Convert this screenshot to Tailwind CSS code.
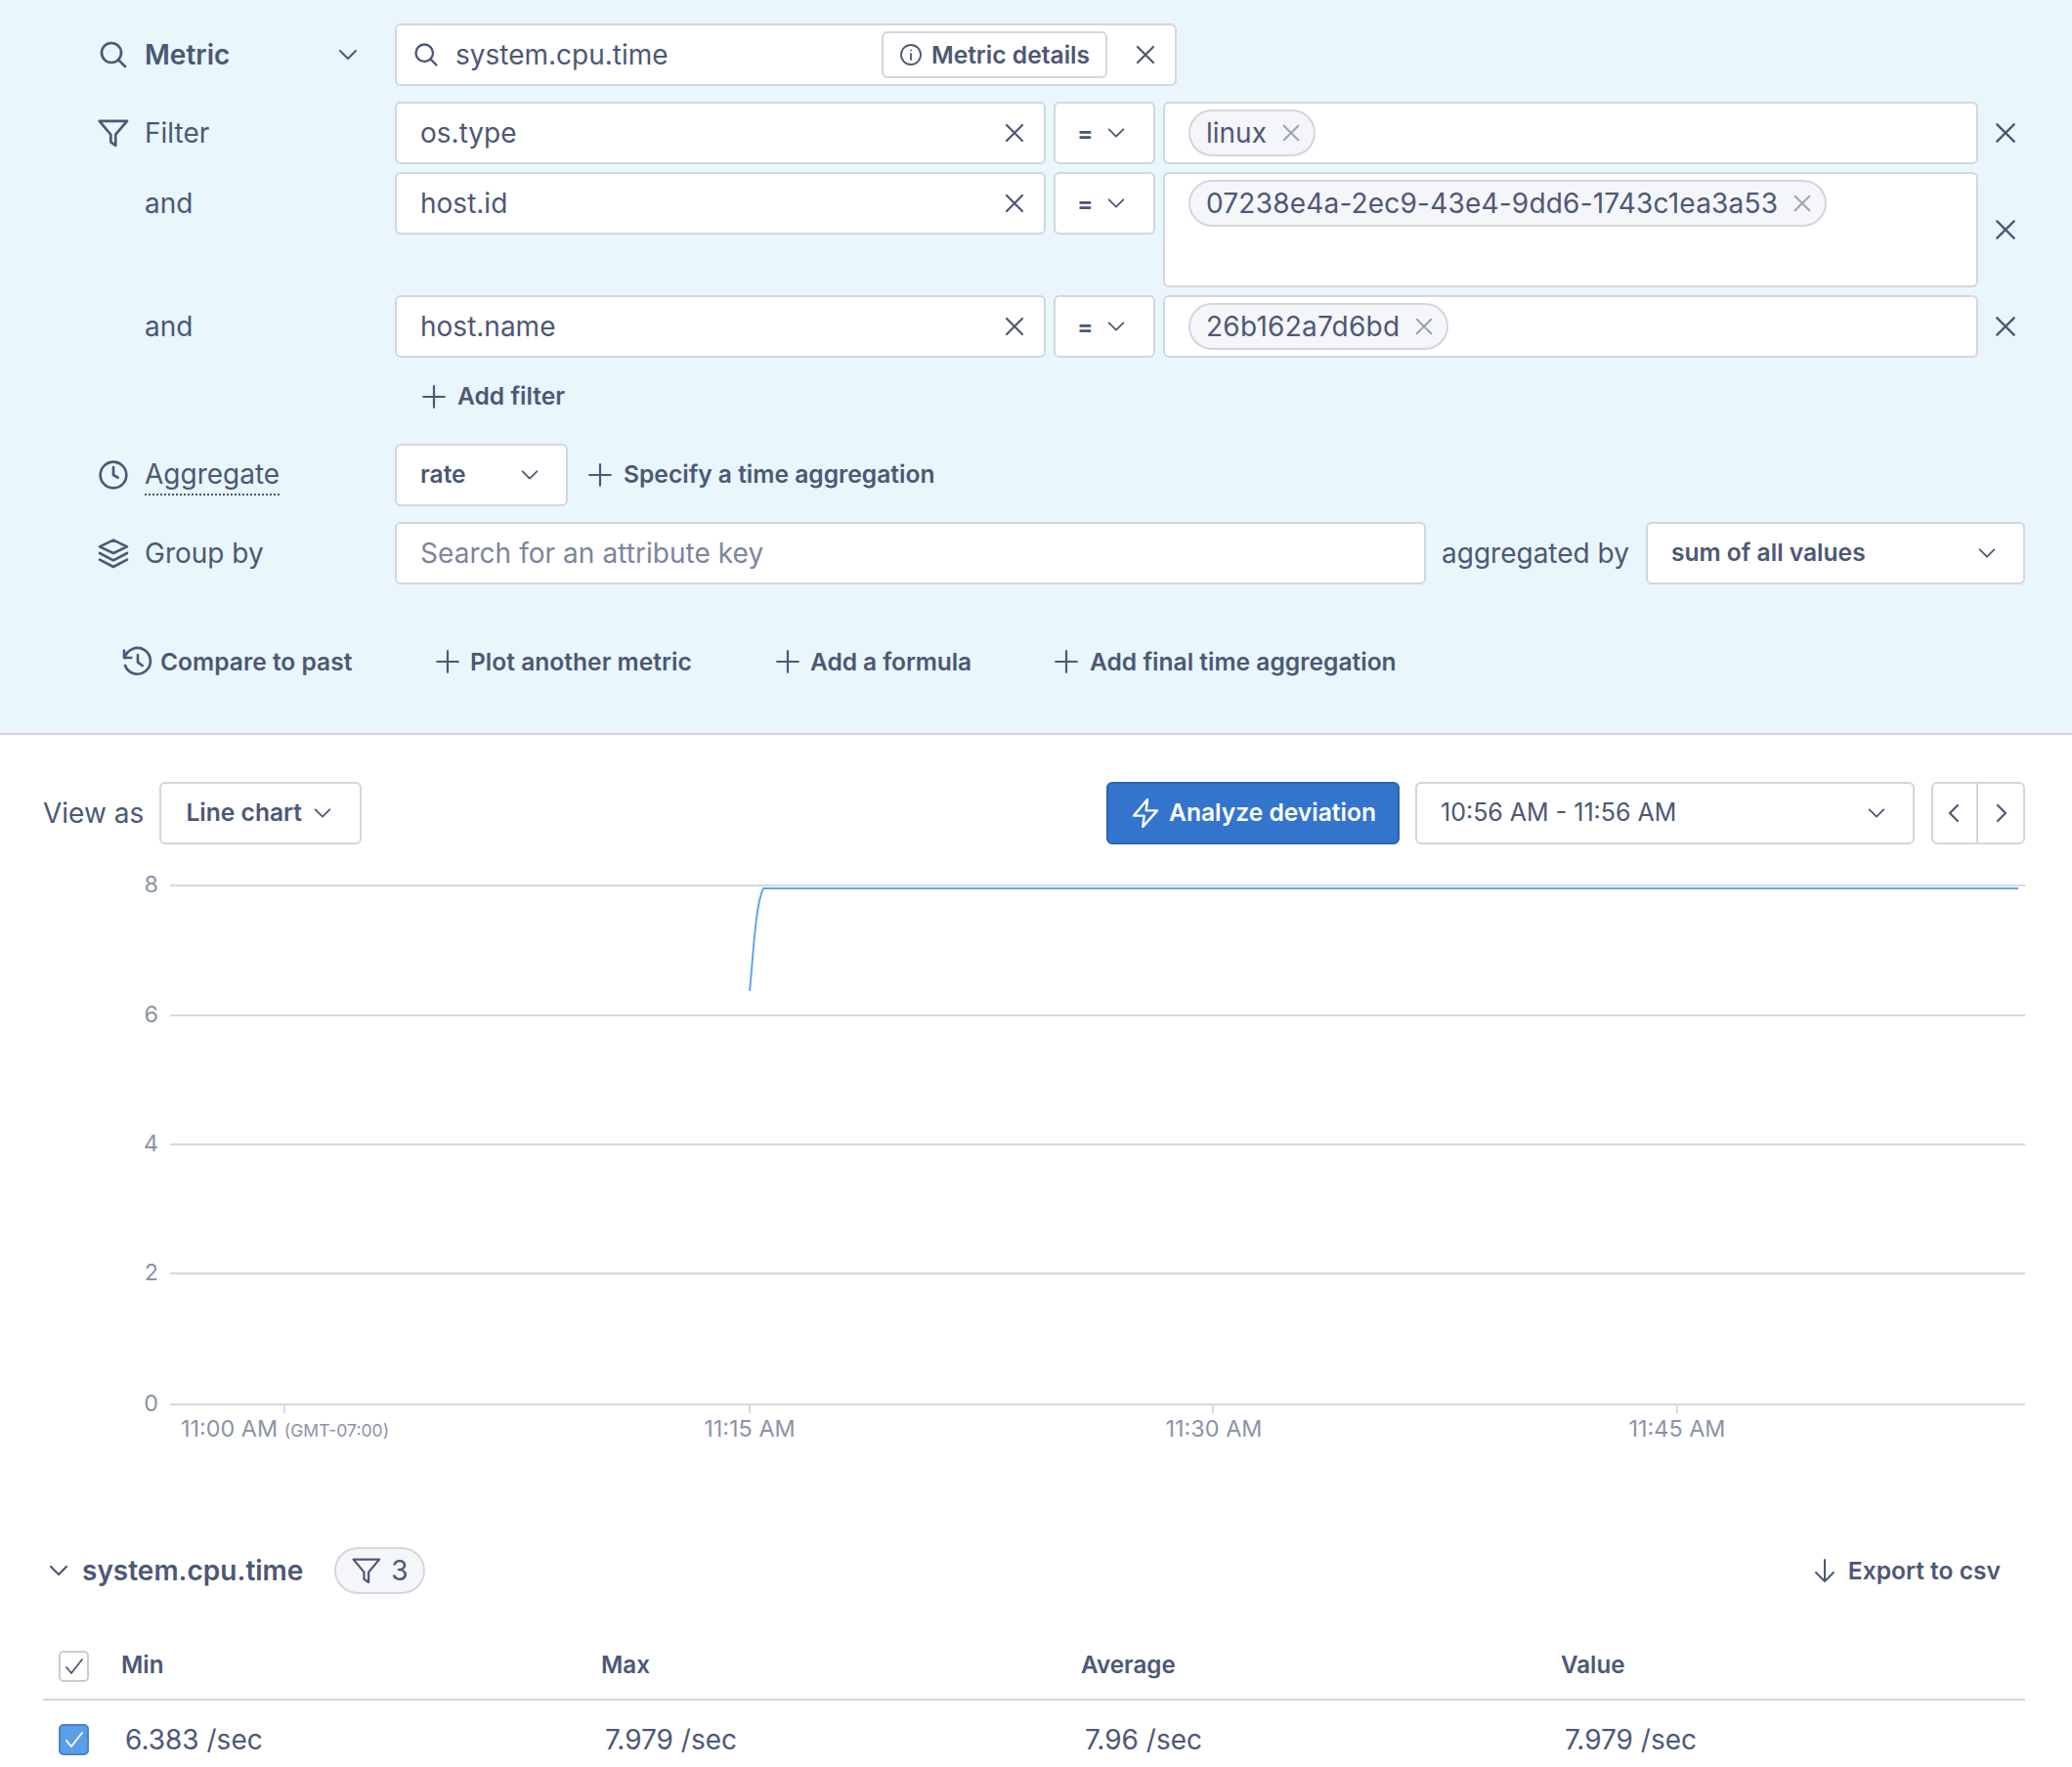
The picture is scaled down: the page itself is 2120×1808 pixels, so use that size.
<!DOCTYPE html>
<html lang="en">
  <head>
    <meta charset="UTF-8" />
    <script src="https://cdn.jsdelivr.net/npm/@tailwindcss/browser@4"></script>
  </head>
  <body class="bg-white font-['Inter',sans-serif] text-[#4c5876] text-[28px] overflow-hidden">
    <div class="w-[2120px] h-[1808px] overflow-hidden">
      <!-- query builder -->
      <section class="h-[752px] bg-[#e9f6fb] border-b-2 border-[#d2d6de] pt-[24px] pl-[100px] pr-[48px]">
        <div class="flex items-center">
          <div class="w-[304px] flex items-center">
            <svg class="w-[32px] h-[32px] mr-[16px]" viewBox="0 0 24 24" fill="none" stroke="currentColor" stroke-width="2" stroke-linecap="round"><circle cx="10.5" cy="10.5" r="7.5"/><path d="M16 16l5 5"/></svg>
            <span class="font-semibold">Metric</span>
            <svg class="w-[24px] h-[24px] ml-[109px]" viewBox="0 0 24 24" fill="none" stroke="currentColor" stroke-width="2" stroke-linecap="round" stroke-linejoin="round"><path d="M4 8l8 8 8-8"/></svg>
          </div>
          <div class="w-[800px] h-[64px] bg-white border-2 border-[#d2d6de] rounded-[6px] flex items-center pl-[16px] pr-[18px]">
            <svg class="w-[28px] h-[28px] mr-[16px]" viewBox="0 0 24 24" fill="none" stroke="currentColor" stroke-width="2" stroke-linecap="round"><circle cx="10.5" cy="10.5" r="7.5"/><path d="M16 16l5 5"/></svg>
            <span class="flex-1">system.cpu.time</span>
            <div class="h-[48px] w-[231px] border-2 border-[#d2d6de] rounded-[6px] flex items-center justify-center gap-[9px] text-[24.6px] font-semibold">
              <svg class="w-[24px] h-[24px]" viewBox="0 0 24 24" fill="none" stroke="currentColor" stroke-width="1.8" stroke-linecap="round"><circle cx="12" cy="12" r="10"/><path d="M12 11v6M12 7.5v.1"/></svg>
              Metric details
            </div>
            <svg class="w-[24px] h-[24px] ml-[27px]" viewBox="0 0 24 24" fill="none" stroke="currentColor" stroke-width="2.2" stroke-linecap="round"><path d="M4 4l16 16M20 4L4 20"/></svg>
          </div>
        </div>

        <!-- filters -->
        <div class="flex mt-[16px]">
          <div class="w-[304px] h-[64px] flex items-center">
            <svg class="w-[32px] h-[32px] mr-[16px]" viewBox="0 0 24 24" fill="none" stroke="currentColor" stroke-width="2" stroke-linejoin="round"><path d="M1.3 2.9h21.2L13.7 13.3v8.3L10 19v-5.7z"/></svg>
            <span>Filter</span>
          </div>
          <div class="w-[666px] h-[64px] bg-white border-2 border-[#d2d6de] rounded-[6px] flex items-center justify-between pl-[24px] pr-[18px]">
            <span>os.type</span>
            <svg class="w-[24px] h-[24px]" viewBox="0 0 24 24" fill="none" stroke="currentColor" stroke-width="2.2" stroke-linecap="round"><path d="M4 4l16 16M20 4L4 20"/></svg>
          </div>
          <div class="w-[104px] h-[64px] ml-[8px] bg-white border-2 border-[#d2d6de] rounded-[6px] flex items-center pl-[22px] gap-[12px] text-[24.6px] font-semibold">
            <span>=</span>
            <svg class="w-[22px] h-[22px]" viewBox="0 0 24 24" fill="none" stroke="currentColor" stroke-width="2" stroke-linecap="round" stroke-linejoin="round"><path d="M4 8l8 8 8-8"/></svg>
          </div>
          <div class="w-[834px] h-[64px] ml-[8px] bg-white border-2 border-[#d2d6de] rounded-[6px] px-[24px] pt-[6px]">
            <div class="inline-flex items-center h-[48px] pl-[16px] pr-[12px] bg-[#f4f6f9] border-2 border-[#d2d6de] rounded-full gap-[14px]">
              <span>linux</span>
              <svg class="w-[22px] h-[22px] text-[#9ca3b4]" viewBox="0 0 24 24" fill="none" stroke="currentColor" stroke-width="2.2" stroke-linecap="round"><path d="M4 4l16 16M20 4L4 20"/></svg>
            </div>
          </div>
          <div class="flex-1 h-[64px] flex items-center justify-end pr-[7px]">
            <svg class="w-[26px] h-[26px]" viewBox="0 0 24 24" fill="none" stroke="currentColor" stroke-width="2.2" stroke-linecap="round"><path d="M4 4l16 16M20 4L4 20"/></svg>
          </div>
        </div>

        <div class="flex mt-[8px]">
          <div class="w-[304px] h-[64px] flex items-center pl-[48px]">and</div>
          <div class="w-[666px] h-[64px] bg-white border-2 border-[#d2d6de] rounded-[6px] flex items-center justify-between pl-[24px] pr-[18px]">
            <span>host.id</span>
            <svg class="w-[24px] h-[24px]" viewBox="0 0 24 24" fill="none" stroke="currentColor" stroke-width="2.2" stroke-linecap="round"><path d="M4 4l16 16M20 4L4 20"/></svg>
          </div>
          <div class="w-[104px] h-[64px] ml-[8px] bg-white border-2 border-[#d2d6de] rounded-[6px] flex items-center pl-[22px] gap-[12px] text-[24.6px] font-semibold">
            <span>=</span>
            <svg class="w-[22px] h-[22px]" viewBox="0 0 24 24" fill="none" stroke="currentColor" stroke-width="2" stroke-linecap="round" stroke-linejoin="round"><path d="M4 8l8 8 8-8"/></svg>
          </div>
          <div class="w-[834px] h-[118px] ml-[8px] bg-white border-2 border-[#d2d6de] rounded-[6px] px-[24px] pt-[6px]">
            <div class="inline-flex items-center h-[48px] pl-[16px] pr-[12px] bg-[#f4f6f9] border-2 border-[#d2d6de] rounded-full gap-[14px]">
              <span class="tracking-[0.2px]">07238e4a-2ec9-43e4-9dd6-1743c1ea3a53</span>
              <svg class="w-[22px] h-[22px] text-[#9ca3b4]" viewBox="0 0 24 24" fill="none" stroke="currentColor" stroke-width="2.2" stroke-linecap="round"><path d="M4 4l16 16M20 4L4 20"/></svg>
            </div>
          </div>
          <div class="flex-1 h-[118px] flex items-center justify-end pr-[7px]">
            <svg class="w-[26px] h-[26px]" viewBox="0 0 24 24" fill="none" stroke="currentColor" stroke-width="2.2" stroke-linecap="round"><path d="M4 4l16 16M20 4L4 20"/></svg>
          </div>
        </div>

        <div class="flex mt-[8px]">
          <div class="w-[304px] h-[64px] flex items-center pl-[48px]">and</div>
          <div class="w-[666px] h-[64px] bg-white border-2 border-[#d2d6de] rounded-[6px] flex items-center justify-between pl-[24px] pr-[18px]">
            <span>host.name</span>
            <svg class="w-[24px] h-[24px]" viewBox="0 0 24 24" fill="none" stroke="currentColor" stroke-width="2.2" stroke-linecap="round"><path d="M4 4l16 16M20 4L4 20"/></svg>
          </div>
          <div class="w-[104px] h-[64px] ml-[8px] bg-white border-2 border-[#d2d6de] rounded-[6px] flex items-center pl-[22px] gap-[12px] text-[24.6px] font-semibold">
            <span>=</span>
            <svg class="w-[22px] h-[22px]" viewBox="0 0 24 24" fill="none" stroke="currentColor" stroke-width="2" stroke-linecap="round" stroke-linejoin="round"><path d="M4 8l8 8 8-8"/></svg>
          </div>
          <div class="w-[834px] h-[64px] ml-[8px] bg-white border-2 border-[#d2d6de] rounded-[6px] px-[24px] pt-[6px]">
            <div class="inline-flex items-center h-[48px] pl-[16px] pr-[12px] bg-[#f4f6f9] border-2 border-[#d2d6de] rounded-full gap-[14px]">
              <span class="tracking-[0.25px]">26b162a7d6bd</span>
              <svg class="w-[22px] h-[22px] text-[#9ca3b4]" viewBox="0 0 24 24" fill="none" stroke="currentColor" stroke-width="2.2" stroke-linecap="round"><path d="M4 4l16 16M20 4L4 20"/></svg>
            </div>
          </div>
          <div class="flex-1 h-[64px] flex items-center justify-end pr-[7px]">
            <svg class="w-[26px] h-[26px]" viewBox="0 0 24 24" fill="none" stroke="currentColor" stroke-width="2.2" stroke-linecap="round"><path d="M4 4l16 16M20 4L4 20"/></svg>
          </div>
        </div>

        <div class="flex items-center h-[32px] mt-[24px] ml-[331px] text-[24.6px] font-semibold gap-[11px]">
          <svg class="w-[26px] h-[26px]" viewBox="0 0 24 24" fill="none" stroke="currentColor" stroke-width="2" stroke-linecap="round"><path d="M12 2v20M2 12h20"/></svg>
          <span class="pb-[2px]">Add filter</span>
        </div>

        <!-- aggregate -->
        <div class="flex items-center mt-[32px]">
          <div class="w-[304px] flex items-center">
            <svg class="w-[32px] h-[32px] mr-[16px]" viewBox="0 0 24 24" fill="none" stroke="currentColor" stroke-width="2" stroke-linecap="round" stroke-linejoin="round"><circle cx="12" cy="12" r="10"/><path d="M12 6v6l3.5 2"/></svg>
            <span class="border-b-2 border-dotted border-[#4a5674] leading-[40px]">Aggregate</span>
          </div>
          <div class="w-[177px] h-[64px] bg-white border-2 border-[#d2d6de] rounded-[6px] flex items-center justify-between pl-[24px] pr-[26px] text-[24.6px] font-semibold">
            <span class="pb-[2px]">rate</span>
            <svg class="w-[22px] h-[22px]" viewBox="0 0 24 24" fill="none" stroke="currentColor" stroke-width="2" stroke-linecap="round" stroke-linejoin="round"><path d="M4 8l8 8 8-8"/></svg>
          </div>
          <div class="flex items-center ml-[20px] gap-[11px] text-[24.6px] font-semibold">
            <svg class="w-[26px] h-[26px]" viewBox="0 0 24 24" fill="none" stroke="currentColor" stroke-width="2" stroke-linecap="round"><path d="M12 2v20M2 12h20"/></svg>
            <span class="pb-[2px]">Specify a time aggregation</span>
          </div>
        </div>

        <div class="flex items-center mt-[16px]">
          <div class="w-[304px] flex items-center">
            <svg class="w-[32px] h-[32px] mr-[16px]" viewBox="0 0 24 24" fill="none" stroke="currentColor" stroke-width="2" stroke-linecap="round" stroke-linejoin="round"><path d="M12 2l10.5 5L12 12 1.5 7zM1.5 12L12 17.5 22.5 12M1.5 17L12 22.5 22.5 17"/></svg>
            <span>Group by</span>
          </div>
          <div class="w-[1055px] h-[64px] bg-white border-2 border-[#d2d6de] rounded-[6px] flex items-center pl-[24px] text-[#7b859e] tracking-[0.05px]">Search for an attribute key</div>
          <span class="ml-[16px]">aggregated by</span>
          <div class="w-[388px] h-[64px] ml-[17px] bg-white border-2 border-[#d2d6de] rounded-[6px] flex items-center justify-between pl-[24px] pr-[26px] text-[24.6px] font-semibold">
            <span class="pb-[2px]">sum of all values</span>
            <svg class="w-[22px] h-[22px]" viewBox="0 0 24 24" fill="none" stroke="currentColor" stroke-width="2" stroke-linecap="round" stroke-linejoin="round"><path d="M4 8l8 8 8-8"/></svg>
          </div>
        </div>

        <!-- actions -->
        <div class="flex items-center mt-[61px] ml-[25px] text-[24.6px] font-semibold">
          <div class="w-[320px] flex items-center gap-[7px]">
            <svg class="w-[32px] h-[32px]" viewBox="0 0 24 24" fill="none" stroke="currentColor" stroke-width="2" stroke-linecap="round" stroke-linejoin="round"><path d="M1.5 3.5v5.5h5.5"/><path d="M2 9A10 10 0 1 1 2.3 15"/><path d="M12 7v5.5l3.5 2.5"/></svg>
            Compare to past
          </div>
          <div class="w-[348px] flex items-center gap-[10px]">
            <svg class="w-[26px] h-[26px]" viewBox="0 0 24 24" fill="none" stroke="currentColor" stroke-width="2" stroke-linecap="round"><path d="M12 2v20M2 12h20"/></svg>
            Plot another metric
          </div>
          <div class="w-[285px] flex items-center gap-[10px]">
            <svg class="w-[26px] h-[26px]" viewBox="0 0 24 24" fill="none" stroke="currentColor" stroke-width="2" stroke-linecap="round"><path d="M12 2v20M2 12h20"/></svg>
            <span class="tracking-[-0.1px]">Add a formula</span>
          </div>
          <div class="flex items-center gap-[11px]">
            <svg class="w-[26px] h-[26px]" viewBox="0 0 24 24" fill="none" stroke="currentColor" stroke-width="2" stroke-linecap="round"><path d="M12 2v20M2 12h20"/></svg>
            Add final time aggregation
          </div>
        </div>
      </section>

      <!-- chart toolbar -->
      <div class="flex items-center mt-[48px] pl-[44px] pr-[48px]">
        <span>View as</span>
        <div class="w-[207px] h-[64px] ml-[16px] pr-[2px] border-2 border-[#d2d6de] rounded-[6px] flex items-center justify-center gap-[10px] text-[24.6px] font-semibold">
          <span class="pb-[2px]">Line chart</span>
          <svg class="w-[22px] h-[22px]" viewBox="0 0 24 24" fill="none" stroke="currentColor" stroke-width="2" stroke-linecap="round" stroke-linejoin="round"><path d="M4 8l8 8 8-8"/></svg>
        </div>
        <div class="w-[300px] h-[64px] ml-auto bg-[#3374cd] border-2 border-[#2b64b3] rounded-[6px] flex items-center justify-center gap-[8px] text-white text-[24.6px] font-semibold">
          <svg class="w-[32px] h-[32px]" viewBox="0 0 24 24" fill="none" stroke="currentColor" stroke-width="1.8" stroke-linejoin="round"><path d="M13.5 1.5L3 14h8l-1 8.5L21 10h-8.5z"/></svg>
          <span class="pb-[2px]">Analyze deviation</span>
        </div>
        <div class="w-[511px] h-[64px] ml-[16px] border-2 border-[#d2d6de] rounded-[6px] flex items-center justify-between pl-[24px] pr-[26px] text-[25px]">
          <span>10:56 AM - 11:56 AM</span>
          <svg class="w-[22px] h-[22px]" viewBox="0 0 24 24" fill="none" stroke="currentColor" stroke-width="2" stroke-linecap="round" stroke-linejoin="round"><path d="M4 8l8 8 8-8"/></svg>
        </div>
        <div class="w-[96px] h-[64px] ml-[17px] border-2 border-[#d2d6de] rounded-[6px] flex">
          <div class="w-1/2 flex items-center justify-center border-r-2 border-[#d2d6de]">
            <svg class="w-[24px] h-[24px]" viewBox="0 0 24 24" fill="none" stroke="currentColor" stroke-width="2.2" stroke-linecap="round" stroke-linejoin="round"><path d="M15 4l-8 8 8 8"/></svg>
          </div>
          <div class="w-1/2 flex items-center justify-center">
            <svg class="w-[24px] h-[24px]" viewBox="0 0 24 24" fill="none" stroke="currentColor" stroke-width="2.2" stroke-linecap="round" stroke-linejoin="round"><path d="M9 4l8 8-8 8"/></svg>
          </div>
        </div>
      </div>

      <!-- chart: svg starts at y=880 -->
      <svg class="block mt-[16px]" width="2120" height="600" viewBox="0 880 2120 600" font-family="Inter, sans-serif" font-size="23.4" fill="#8a93a8">
        <g stroke="#d7d9e1" stroke-width="2">
          <path d="M174 906H2072M174 1039H2072M174 1171H2072M174 1303H2072M174 1437H2072"/>
          <path d="M291 1438v8M767 1438v8M1241 1438v8M1716 1438v8"/>
        </g>
        <path d="M767 1014C771 975 773 925 781 909H2065" fill="none" stroke="#63a4ec" stroke-width="2"/>
        <g text-anchor="end">
          <text x="162" y="913">8</text>
          <text x="162" y="1046">6</text>
          <text x="162" y="1178">4</text>
          <text x="162" y="1310">2</text>
          <text x="162" y="1444">0</text>
        </g>
        <text x="185" y="1470">11:00 AM <tspan font-size="17.6">(GMT-07:00)</tspan></text>
        <g text-anchor="middle">
          <text x="767" y="1470">11:15 AM</text>
          <text x="1242" y="1470">11:30 AM</text>
          <text x="1716" y="1470">11:45 AM</text>
        </g>
      </svg>

      <!-- legend table -->
      <div class="pl-[44px] pr-[48px]">
        <div class="flex items-center h-[48px] mt-[103px]">
          <svg class="w-[24px] h-[24px] ml-[4px]" viewBox="0 0 24 24" fill="none" stroke="currentColor" stroke-width="2.2" stroke-linecap="round" stroke-linejoin="round"><path d="M4 8l8 8 8-8"/></svg>
          <span class="ml-[12px] font-semibold">system.cpu.time</span>
          <div class="ml-[32px] w-[93px] h-[48px] bg-[#f4f6f9] border-2 border-[#d2d6de] rounded-full flex items-center justify-center gap-[10px]">
            <svg class="w-[30px] h-[30px]" viewBox="0 0 24 24" fill="none" stroke="currentColor" stroke-width="1.8" stroke-linejoin="round"><path d="M1.3 2.9h21.2L13.7 13.3v8.3L10 19v-5.7z"/></svg>
            3
          </div>
          <div class="ml-auto mr-[25px] flex items-center gap-[12px] text-[24.6px] font-semibold">
            <svg class="w-[24px] h-[26px]" viewBox="0 0 24 26" fill="none" stroke="currentColor" stroke-width="2" stroke-linecap="round" stroke-linejoin="round"><path d="M12 2v22M3 15l9 9 9-9"/></svg>
            Export to csv
          </div>
        </div>
        <div class="grid grid-cols-[80px_491px_491px_491px_1fr] items-center h-[67px] mt-[42px] pb-[2px] border-b-2 border-[#d2d6de] text-[24.2px] font-semibold">
          <div class="w-[31px] h-[32px] ml-[16px] border-2 border-[#c9ccd1] rounded-[5px] flex items-center justify-center">
            <svg class="w-[24px] h-[24px]" viewBox="0 0 24 24" fill="none" stroke="currentColor" stroke-width="1.8" stroke-linecap="round" stroke-linejoin="round"><path d="M4 13l5 6L20 5"/></svg>
          </div>
          <span>Min</span><span>Max</span><span>Average</span><span>Value</span>
        </div>
        <div class="grid grid-cols-[84px_491px_491px_491px_1fr] items-center h-[80px]">
          <div class="w-[31px] h-[32px] ml-[16px] bg-[#5b9fe8] border-2 border-[#4d83c9] rounded-[5px] flex items-center justify-center">
            <svg class="w-[24px] h-[24px]" viewBox="0 0 24 24" fill="none" stroke="white" stroke-width="1.8" stroke-linecap="round" stroke-linejoin="round"><path d="M4 13l5 6L20 5"/></svg>
          </div>
          <span>6.383 /sec</span><span>7.979 /sec</span><span>7.96 /sec</span><span>7.979 /sec</span>
        </div>
      </div>
    </div>
  </body>
</html>
